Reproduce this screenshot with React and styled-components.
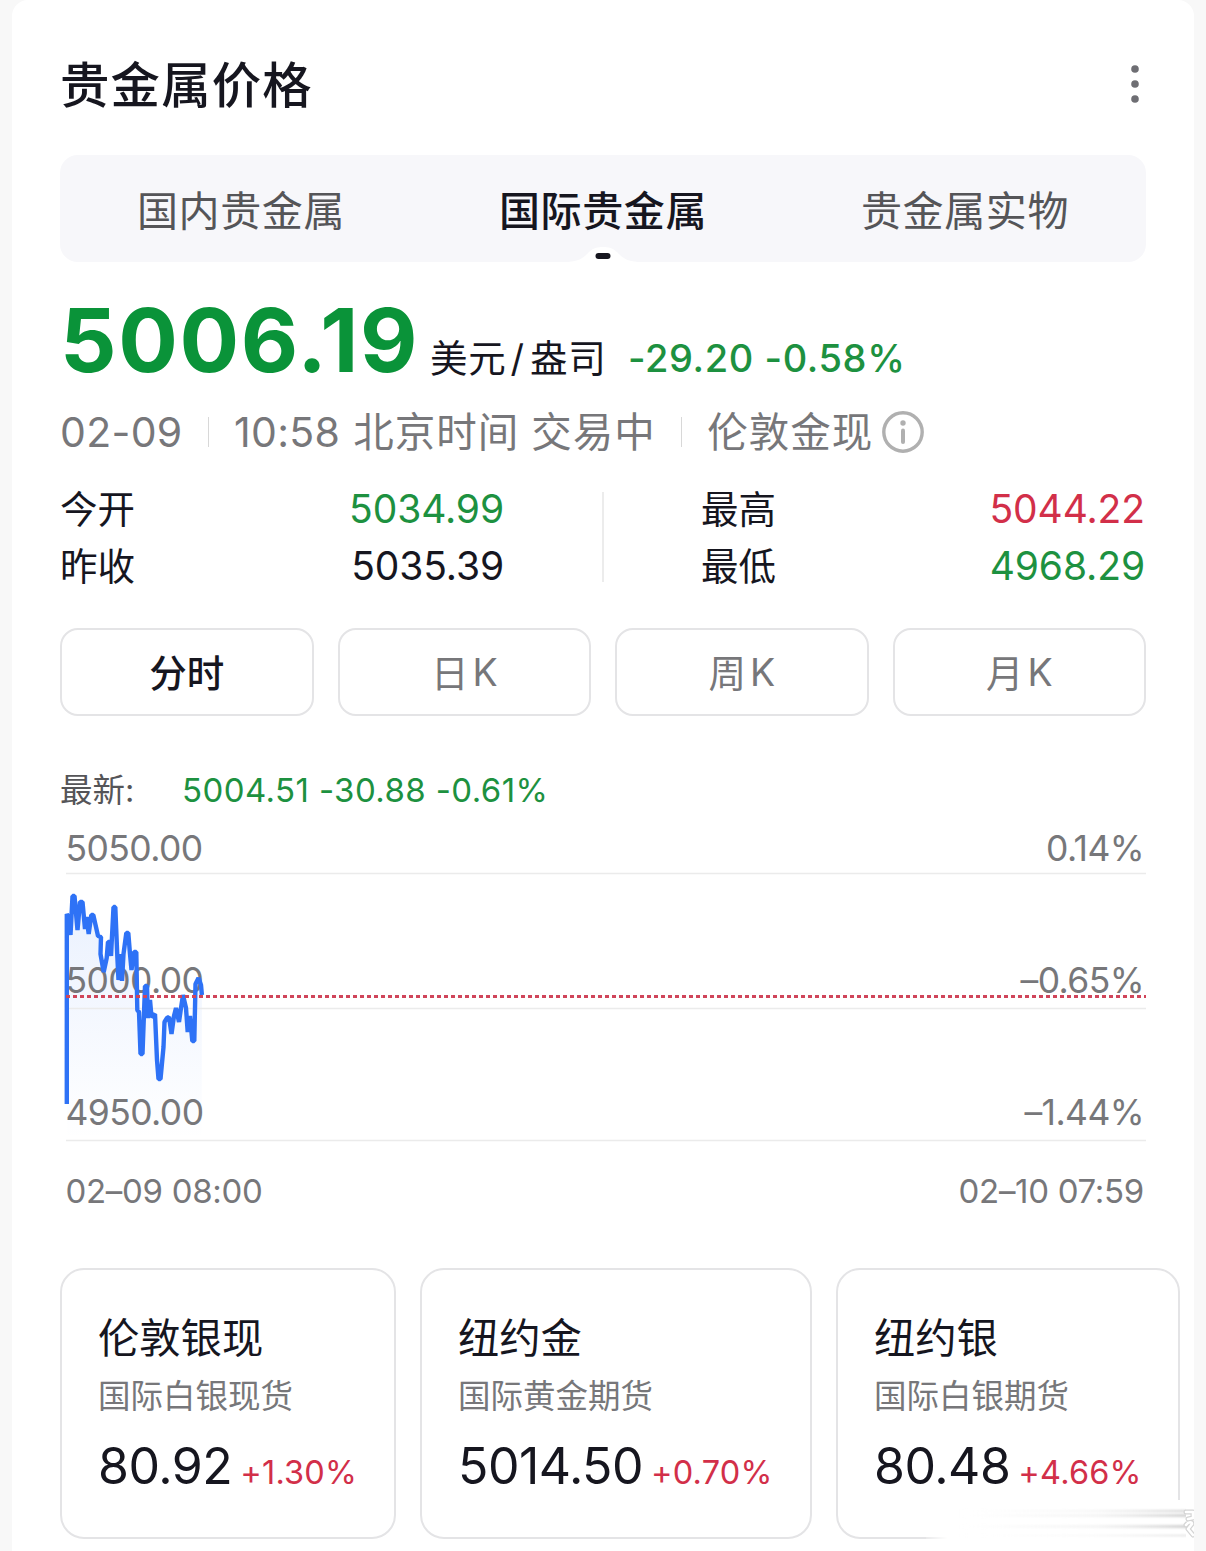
import React from 'react';
import styled, { createGlobalStyle } from 'styled-components';

const tabs = ['国内贵金属', '国际贵金属', '贵金属实物']
const periods = [['分时'], ['日', 'K'], ['周', 'K'], ['月', 'K']]
const metals = [
  { name: '伦敦银现', desc: '国际白银现货', price: '80.92', change: '+1.30%', width: 336 },
  { name: '纽约金', desc: '国际黄金期货', price: '5014.50', change: '+0.70%', width: 392 },
  { name: '纽约银', desc: '国际白银期货', price: '80.48', change: '+4.66%', width: 344 },
]
const trend = '6.8,284 6.8,94 8.5,97 10.5,115 12.5,76 14.5,76 17.5,110 20,82 22.5,82 25,109 26.5,97 28.7,114 31.3,95 33.3,95 36,107 38,116 41,117 40.5,134 43.7,152 46.7,138 48,122 50,122 51,136 53.5,87 55.3,87 57.3,136 58.5,160 60.5,134 62,161 63.5,134 66.3,113 68.3,113 70,134 71.5,150 74,132 76.3,132 77.3,190 79,192 80.5,234 82.5,234 85,166 87,166 88,198 90,180 91.5,197 95,194 97,240 98.5,259 100.5,259 103.5,227 104.5,202 107,198 109,197 111.5,214 114,196 116,188 119,202 121,188 123,175 126,188 127.7,212 130,196 132.3,221 134.3,221 135.5,164 138.5,158 141,165 141.9,175'

function Chart() {
  return (
    <ChartSvg viewBox='0 0 1086 400'>
      <defs>
        <linearGradient id='area' x1='0' y1='0' x2='0' y2='1'>
          <stop offset='0' stopColor='#2e72f6' stopOpacity='0.1' />
          <stop offset='1' stopColor='#2e72f6' stopOpacity='0' />
        </linearGradient>
      </defs>
      <polygon points={`${trend} 141.7,320 7,320`} fill='url(#area)' />
      <path d='M6 53.5H1086M6 188.5H1086M6 320.5H1086' stroke='#ebebeb' strokeWidth='1.6' />
      <text x='5.5' y='41'>5050.00</text>
      <text x='5.5' y='173'>5000.00</text>
      <text x='5.5' y='305'>4950.00</text>
      <text x='1084' y='41' textAnchor='end'>0.14%</text>
      <text x='1084' y='173' textAnchor='end'>–0.65%</text>
      <text x='1084' y='305' textAnchor='end'>–1.44%</text>
      <polyline points={trend} fill='none' stroke='#2e72f6' strokeWidth='4.4' strokeLinejoin='bevel' />
      <path d='M6 176.5H1086' stroke='#d0455a' strokeWidth='3' strokeDasharray='4 3' />
      <text className='time' x='5.5' y='383'>02–09 08:00</text>
      <text className='time' x='1084' y='383' textAnchor='end'>02–10 07:59</text>
    </ChartSvg>
  )
}

function App() {
  return (
    <>
      <GlobalStyle />
      <Panel>
        <Header>
          <h1>贵金属价格</h1>
          <svg width='10' height='40' viewBox='0 0 10 40' fill='#6e6e73'>
            <circle cx='5' cy='5' r='3.8' />
            <circle cx='5' cy='20' r='3.8' />
            <circle cx='5' cy='35' r='3.8' />
          </svg>
        </Header>
        <Tabs>
          {tabs.map((tab, i) => <Tab key={tab} $active={i === 1}>{tab}</Tab>)}
          <Notch viewBox='0 0 70 16'>
            <path d='M0 16C12 15 15 12 21 6C26 1.5 30 1 35 1S44 1.5 49 6C55 12 58 15 70 16Z' fill='#fff' />
            <rect x='27.5' y='7' width='15' height='6' rx='3' fill='#16161f' />
          </Notch>
        </Tabs>
        <PriceRow>
          <strong>5006.19</strong>
          <Unit>美元<i>/</i>盎司</Unit>
          <Change>-29.20 -0.58%</Change>
        </PriceRow>
        <Meta>
          <Digits>02-09</Digits>
          <Divider />
          <Digits>10:58</Digits>
          <span className='zone'>北京时间</span>
          <span className='state'>交易中</span>
          <Divider />
          <span>伦敦金现</span>
          <svg width='42' height='42' viewBox='0 0 42 42' fill='none' stroke='#b0b0b0'>
            <circle cx='21' cy='21' r='19.2' strokeWidth='3.4' />
            <path d='M21 19.5V31' strokeWidth='4' strokeLinecap='round' />
            <circle cx='21' cy='12' r='2.7' fill='#b0b0b0' stroke='none' />
          </svg>
        </Meta>
        <Stats>
          <StatColumn>
            <Stat $color='#1d9140'><span>今开</span><b>5034.99</b></Stat>
            <Stat $color='#16161f'><span>昨收</span><b>5035.39</b></Stat>
          </StatColumn>
          <StatLine />
          <StatColumn>
            <Stat $color='#d22f49'><span>最高</span><b>5044.22</b></Stat>
            <Stat $color='#1d9140'><span>最低</span><b>4968.29</b></Stat>
          </StatColumn>
        </Stats>
        <Periods>
          {periods.map(([unit, mark], i) => (
            <Period key={unit} $active={i === 0}>
              <span>{unit}</span>
              {mark && <b>{mark}</b>}
            </Period>
          ))}
        </Periods>
        <Latest>
          <span>最新:</span>
          <b>5004.51 -30.88 -0.61%</b>
        </Latest>
        <Chart />
        <Cards>
          {metals.map((metal) => (
            <Card key={metal.name} $width={metal.width}>
              <h2>{metal.name}</h2>
              <p>{metal.desc}</p>
              <CardPrice>
                <b>{metal.price}</b>
                <span>{metal.change}</span>
              </CardPrice>
            </Card>
          ))}
          <Smear viewBox='0 0 272 40'>
            <defs>
              <linearGradient id='veil'>
                <stop offset='0' stopColor='#fff' stopOpacity='0.2' />
                <stop offset='0.08' stopColor='#fff' />
              </linearGradient>
              <linearGradient id='streak'>
                <stop offset='0' stopColor='#eee' stopOpacity='0' />
                <stop offset='0.6' stopColor='#e6e6e6' stopOpacity='0.4' />
                <stop offset='1' stopColor='#d2d2d2' />
              </linearGradient>
              <filter id='soft'>
                <feGaussianBlur stdDeviation='0 1.2' />
              </filter>
            </defs>
            <rect width='268' height='40' fill='url(#veil)' />
            <g fill='url(#streak)' filter='url(#soft)'>
              <rect x='30' y='10' width='230' height='2' />
              <rect x='30' y='14' width='230' height='3' />
              <rect x='30' y='25' width='230' height='3' />
              <rect x='30' y='35' width='230' height='1' />
            </g>
            <g fill='none' strokeLinejoin='round' strokeLinecap='round'>
              <path d='M260 12H267V18L262 19M260 25C263 21 266 22 266 24L262 29L267 35' stroke='#d4d4d4' strokeWidth='5' />
              <path d='M260 12H267V18L262 19M260 25C263 21 266 22 266 24L262 29L267 35' stroke='#fff' strokeWidth='2.6' />
            </g>
          </Smear>
        </Cards>
      </Panel>
    </>
  )
}

const GlobalStyle = createGlobalStyle`
  * {
    box-sizing: border-box;
    margin: 0;
  }
  body {
    background: #f8f8f8;
    color: #16161f;
    font-family: Inter, 'Noto Sans CJK SC', sans-serif;
    overflow: hidden;
  }
  b {
    font-weight: 400;
  }
`
const Panel = styled.main`
  width: 1182px;
  height: 1551px;
  margin: 0 12px;
  padding: 0 48px;
  background: #fff;
  border-radius: 16px 16px 0 0;
  overflow: hidden;
`
const Header = styled.header`
  display: flex;
  align-items: center;
  justify-content: space-between;
  height: 155px;
  padding: 13px 6px 0 0;
  h1 {
    margin-top: -5px;
    font-size: 49.4px;
    font-weight: 500;
    letter-spacing: 1.2px;
  }
`
const Tabs = styled.nav`
  position: relative;
  display: grid;
  grid-template-columns: repeat(3, 1fr);
  height: 107px;
  background: #f7f7fa;
  border-radius: 18px;
`
const Tab = styled.span`
  line-height: 112px;
  text-align: center;
  font-size: 41px;
  letter-spacing: 0.6px;
  font-weight: ${({ $active }) => ($active ? 500 : 400)};
  color: ${({ $active }) => ($active ? '#16161f' : '#555558')};
`
const Notch = styled.svg`
  position: absolute;
  left: 508px;
  bottom: 0;
  width: 70px;
  height: 16px;
`
const PriceRow = styled.div`
  display: flex;
  align-items: baseline;
  height: 142px;
  line-height: 156px;
  strong {
    width: 370px;
    font-size: 88.5px;
    font-weight: 700;
    letter-spacing: 1.6px;
    color: #0a9339;
  }
`
const Unit = styled.span`
  width: 198px;
  font-size: 37.5px;
  line-height: 1;
  letter-spacing: 0.8px;
  i {
    font-style: normal;
    margin: 0 5px 0 4px;
  }
`
const Change = styled.span`
  font-size: 38px;
  font-weight: 500;
  letter-spacing: 0.6px;
  color: #1d9140;
`
const Meta = styled.div`
  display: flex;
  align-items: center;
  height: 55px;
  font-size: 40.5px;
  line-height: 56px;
  letter-spacing: 1px;
  color: #77777a;
  span {
    padding-top: 3px;
  }
  .zone {
    margin-left: 13px;
  }
  .state {
    margin-left: 12px;
  }
  svg {
    margin-left: 9px;
  }
`
const Digits = styled.b`
  font-size: 41px;
  letter-spacing: 0.3px;
`
const Divider = styled.i`
  width: 1.5px;
  height: 30px;
  margin: 0 25px;
  background: #d8d8d8;
`
const Stats = styled.section`
  display: flex;
  align-items: center;
  justify-content: space-between;
  height: 114px;
  margin-top: 21px;
`
const StatColumn = styled.div`
  width: 445px;
  &:first-child {
    padding-right: 1px;
  }
  &:last-child {
    padding-right: 1px;
  }
`
const StatLine = styled.i`
  width: 1.5px;
  height: 90px;
  background: #ececec;
`
const Stat = styled.div`
  display: flex;
  justify-content: space-between;
  height: 57px;
  line-height: 57px;
  font-size: 37.5px;
  span {
    padding-top: 1px;
  }
  b {
    font-size: 39px;
    letter-spacing: -0.1px;
    color: ${({ $color }) => $color};
  }
`
const Periods = styled.div`
  display: grid;
  grid-template-columns: repeat(4, 1fr);
  gap: 24px;
  margin-top: 34px;
`
const Period = styled.div`
  display: flex;
  justify-content: center;
  gap: 4px;
  height: 88px;
  line-height: 86px;
  border: 2px solid #e4e4e6;
  border-radius: 18px;
  font-size: 37.5px;
  font-weight: ${({ $active }) => ($active ? 500 : 400)};
  color: ${({ $active }) => ($active ? '#16161f' : '#77777a')};
  span {
    padding-top: 1px;
  }
`
const Latest = styled.div`
  display: flex;
  height: 54px;
  margin-top: 47px;
  line-height: 54px;
  font-size: 32.5px;
  color: #555558;
  span {
    width: 122px;
    padding-top: 1px;
  }
  b {
    font-size: 33px;
    letter-spacing: 0.4px;
    color: #1d9140;
  }
`
const ChartSvg = styled.svg`
  display: block;
  width: 1086px;
  height: 400px;
  margin-top: 3px;
  text {
    fill: #77777a;
    font-size: 35.5px;
    letter-spacing: -0.6px;
  }
  .time {
    font-size: 33px;
    letter-spacing: -0.3px;
  }
`
const Cards = styled.section`
  position: relative;
  display: flex;
  gap: 24px;
  width: 1134px;
  margin-top: 48px;
`
const Card = styled.article`
  flex: none;
  width: ${({ $width }) => $width}px;
  height: 271px;
  padding: 39px 0 0 36px;
  border: 2px solid #e4e4e6;
  border-radius: 24px;
  h2 {
    font-size: 41.3px;
    font-weight: 400;
    line-height: 58px;
  }
  p {
    font-size: 32.5px;
    line-height: 60px;
    color: #77777a;
  }
`
const CardPrice = styled.div`
  display: flex;
  align-items: baseline;
  gap: 8px;
  line-height: 79px;
  b {
    font-size: 50px;
    letter-spacing: -0.5px;
  }
  span {
    font-size: 32.5px;
    letter-spacing: 0.2px;
    color: #d22f49;
  }
`
const Smear = styled.svg`
  position: absolute;
  right: -4px;
  bottom: -1px;
  width: 272px;
  height: 40px;
`
export default App;
